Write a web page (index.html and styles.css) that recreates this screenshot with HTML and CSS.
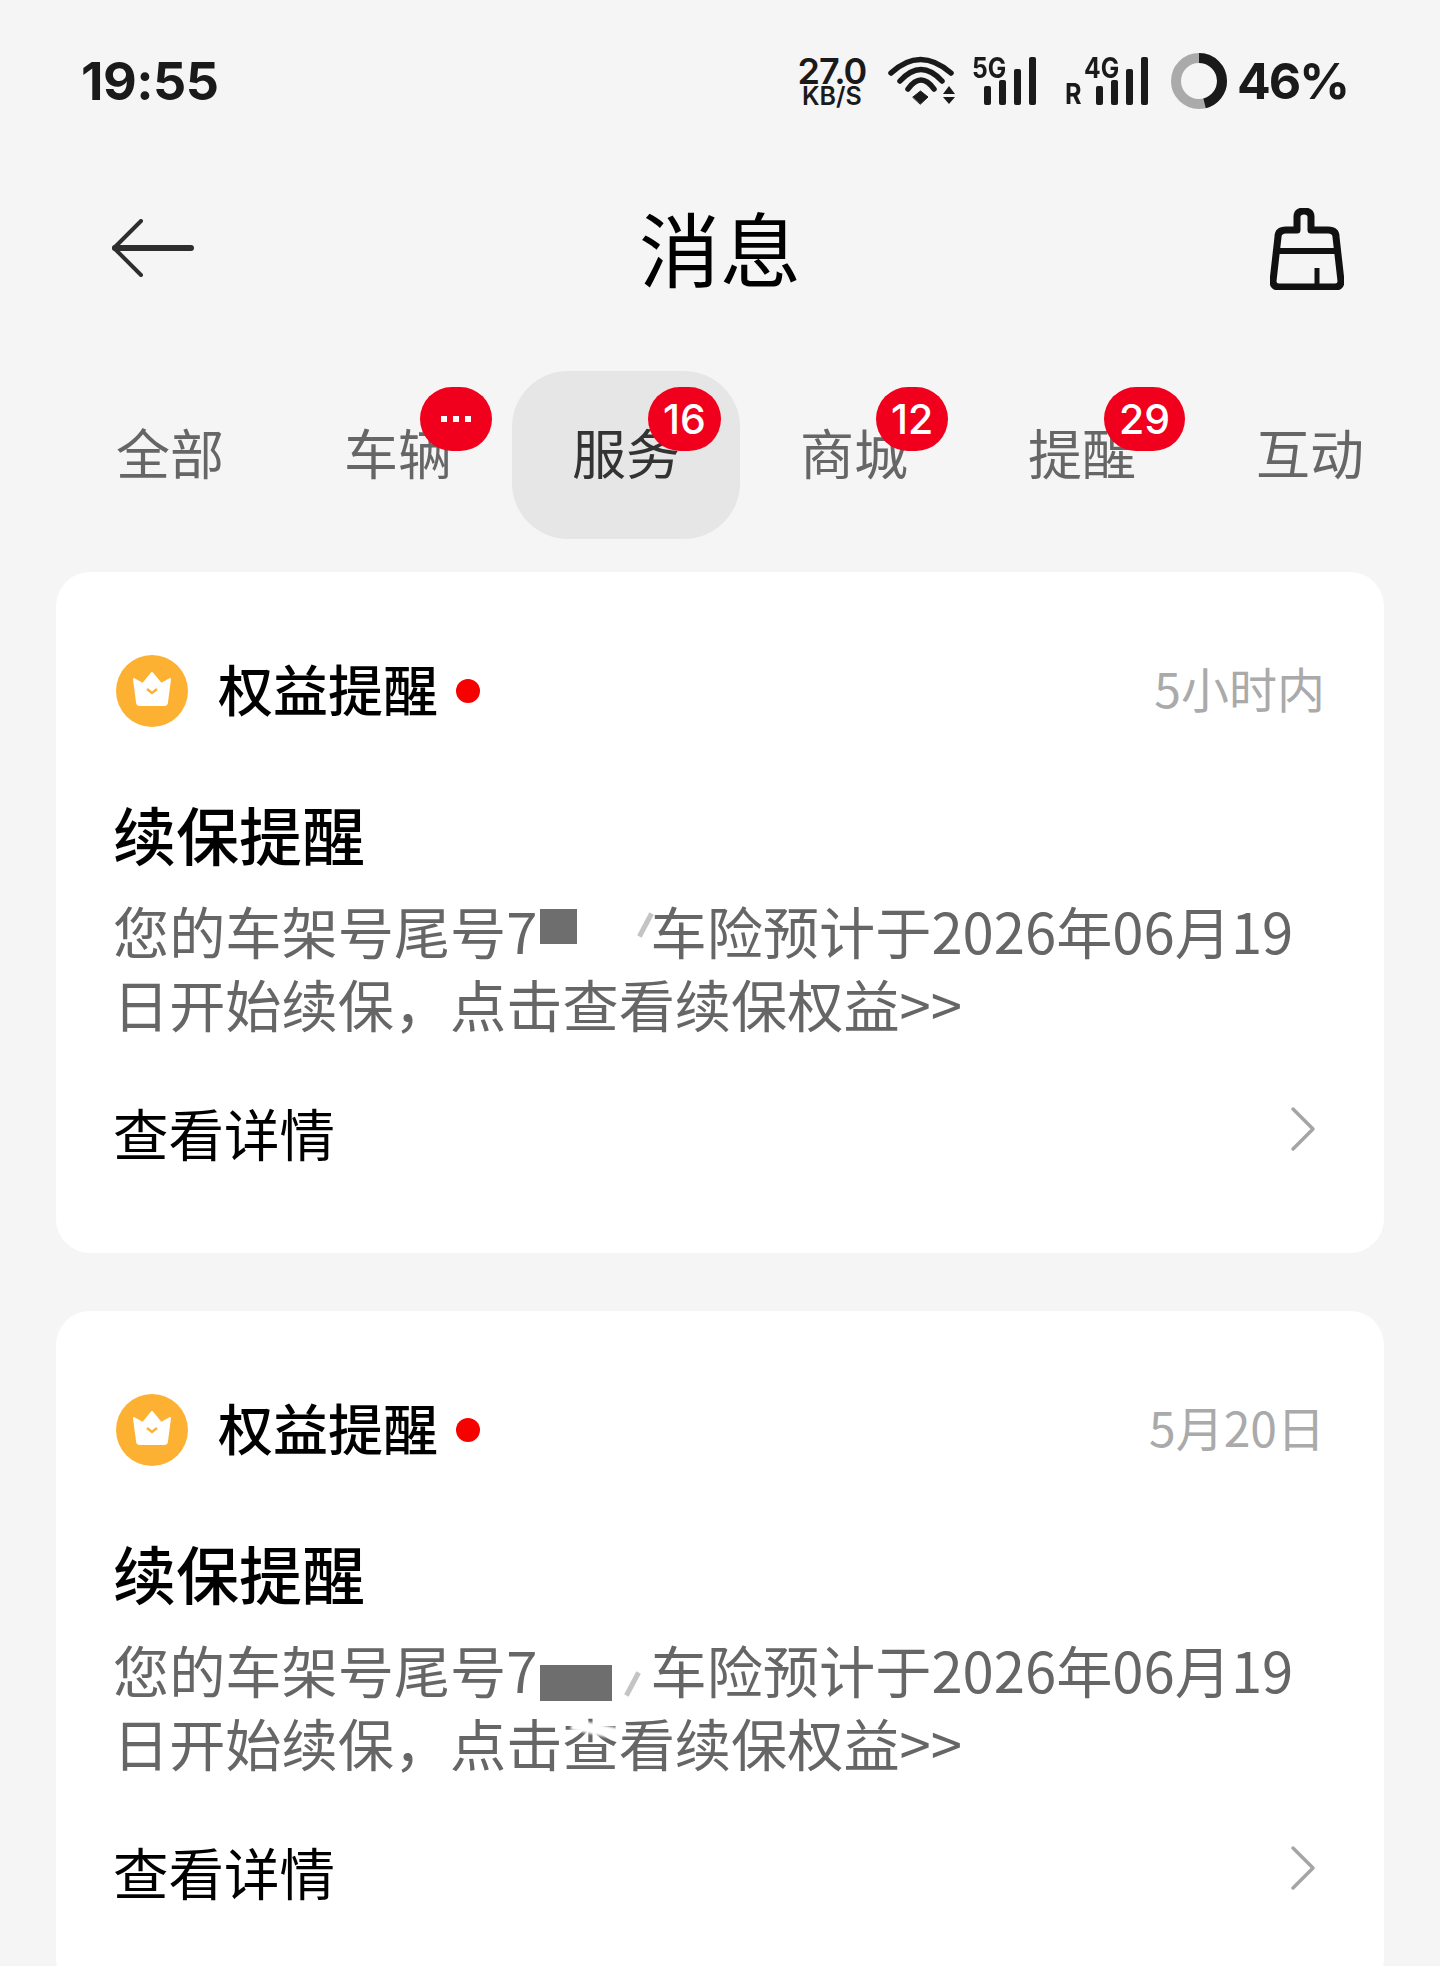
FILE: index.html
```html
<!DOCTYPE html>
<html lang="zh-CN">

<head>
    <meta charset="UTF-8">
    <meta name="viewport" content="width=device-width, initial-scale=1.0">
    <title>消息</title>

    <link rel="stylesheet" href="styles.css">
</head>

<body>
    <div class="statusbar">
        <div class="clock">19:55</div>
        <div class="status-right">
            <div class="speed">
                <span class="speed-num">27.0</span>
                <span class="speed-unit">KB/S</span>
            </div>
            <svg class="wifi" viewBox="0 0 70 50" fill="none" stroke="#1a1a1a" stroke-width="5.5" stroke-linecap="round">
                <path d="M4 17Q33 -10 64 17" />
                <path d="M13 25Q34 2 55 25" />
                <path d="M21 33Q34 15 47 33" />
                <path d="M26 41L33.5 35L41 41L33.5 48Z" fill="#1a1a1a" stroke-width="1" stroke="#1a1a1a" />
                <path d="M56 38L62 30L68 38ZM56 41L68 41L62 48Z" fill="#1a1a1a" stroke="none" />
            </svg>
            <div class="signal signal-5g">
                <span class="net">5G</span>
                <i class="bar b1"></i><i class="bar b2"></i><i class="bar b3"></i><i class="bar b4"></i>
            </div>
            <div class="signal signal-4g">
                <span class="roam">R</span>
                <span class="net">4G</span>
                <i class="bar b1"></i><i class="bar b2"></i><i class="bar b3"></i><i class="bar b4"></i>
            </div>
            <svg class="ring" viewBox="0 0 56 56" fill="none" stroke-width="10">
                <circle cx="28" cy="28" r="23" stroke="#aaaaaa" />
                <circle cx="28" cy="28" r="23" stroke="#1a1a1a" pathLength="100" stroke-dasharray="46 54" transform="rotate(-90 28 28)" />
            </svg>
            <div class="battery">46%</div>
        </div>
    </div>

    <div class="header">
        <svg class="back" viewBox="0 0 82 58" fill="none" stroke="#2e2e2e" stroke-width="4" stroke-linecap="round" stroke-linejoin="round">
            <path d="M29 2L2 29L29 56" />
            <path d="M3 29H79" stroke-width="6" />
        </svg>
        <div class="title">消息</div>
        <svg class="brush" viewBox="0 0 74 82" fill="none" stroke="#111" stroke-width="7" stroke-linejoin="round">
            <path d="M27 22V9Q27 3 34 3Q41 3 41 9V22H58Q66 22 66 29L71 73Q71 79 65 79H9Q3 79 3 73L8 29Q8 22 16 22Z" />
            <path d="M7 43H67" stroke-width="6" />
            <path d="M47 60V79" stroke-width="5" />
        </svg>
    </div>

    <div class="tabs">
        <div class="tab">全部</div>
        <div class="tab">车辆
            <div class="badge"><i></i><i></i><i></i></div>
        </div>
        <div class="tab on">服务
            <div class="badge">16</div>
        </div>
        <div class="tab">商城
            <div class="badge">12</div>
        </div>
        <div class="tab">提醒
            <div class="badge">29</div>
        </div>
        <div class="tab">互动</div>
    </div>

    <div class="list">
        <div class="card">
            <div class="card-head">
                <svg class="crown" viewBox="0 0 72 72">
                    <circle cx="36" cy="36" r="36" fill="#fdb133" />
                    <path d="M18 24L27 29L36 18L45 29L54 24L51 47Q51 50 48 50H24Q21 50 21 47Z" fill="#fff" stroke="#fff" stroke-width="2" stroke-linejoin="round" />
                    <path d="M31 34L36 38L41 34" fill="none" stroke="#fdb133" stroke-width="2.5" />
                </svg>
                <div class="kind">权益提醒</div>
                <div class="dot"></div>
                <div class="time">5小时内</div>
            </div>
            <div class="card-title">续保提醒</div>
            <div class="card-text">您的车架号尾号7<span class="mask mask-a"><i class="mask-block"></i><i class="mask-slash"></i></span>车险预计于2026年06月19日开始续保，点击查看续保权益&gt;&gt;</div>
            <div class="card-more">
                <span>查看详情</span>
                <svg class="arrow" viewBox="0 0 26 46" fill="none" stroke="#a5a5a5" stroke-width="3.5" stroke-linecap="round" stroke-linejoin="round">
                    <path d="M3 3L23 23L3 43" />
                </svg>
            </div>
        </div>

        <div class="card">
            <div class="card-head">
                <svg class="crown" viewBox="0 0 72 72">
                    <circle cx="36" cy="36" r="36" fill="#fdb133" />
                    <path d="M18 24L27 29L36 18L45 29L54 24L51 47Q51 50 48 50H24Q21 50 21 47Z" fill="#fff" stroke="#fff" stroke-width="2" stroke-linejoin="round" />
                    <path d="M31 34L36 38L41 34" fill="none" stroke="#fdb133" stroke-width="2.5" />
                </svg>
                <div class="kind">权益提醒</div>
                <div class="dot"></div>
                <div class="time">5月20日</div>
            </div>
            <div class="card-title">续保提醒</div>
            <div class="card-text">您的车架号尾号7<span class="mask mask-b"><i class="mask-block"></i><i class="mask-slash"></i><i class="mask-smear"></i></span>车险预计于2026年06月19日开始续保，点击查看续保权益&gt;&gt;</div>
            <div class="card-more">
                <span>查看详情</span>
                <svg class="arrow" viewBox="0 0 26 46" fill="none" stroke="#a5a5a5" stroke-width="3.5" stroke-linecap="round" stroke-linejoin="round">
                    <path d="M3 3L23 23L3 43" />
                </svg>
            </div>
        </div>
    </div>
</body>

</html>
```

FILE: styles.css
```css
* {
    box-sizing: border-box;
}

body {
    margin: 0;
    height: 1966px;
    overflow: hidden;
    background-color: #f5f5f5;
    font-family: "Noto Sans CJK SC", "Noto Sans", sans-serif;
    color: #000;
}

i {
    display: block;
}

/* 状态栏 */
.statusbar {
    height: 162px;
    padding: 0 92px 0 81px;
    display: flex;
    align-items: center;
    justify-content: space-between;
    color: #1a1a1a;
}

.clock {
    font-family: Inter, sans-serif;
    font-size: 52px;
    font-weight: 700;
    letter-spacing: -.5px;
}

.status-right {
    display: flex;
    align-items: center;
}

.speed {
    width: 70px;
    display: flex;
    flex-direction: column;
    align-items: center;
    font-family: Inter, sans-serif;
    font-weight: 600;
}

.speed-num {
    font-size: 36px;
    line-height: 29px;
    letter-spacing: -1px;
}

.speed-unit {
    font-size: 25px;
    line-height: 20px;
}

.wifi {
    width: 70px;
    height: 50px;
    margin-left: 20px;
}

.signal {
    position: relative;
    height: 48px;
    display: flex;
    align-items: flex-end;
    justify-content: flex-end;
    gap: 8px;
}

.signal-5g {
    width: 64px;
    margin-left: 15px;
}

.signal-4g {
    width: 83px;
    margin-left: 29px;
}

.bar {
    width: 7px;
    border-radius: 2px;
    background-color: #1a1a1a;
}

.b1 {
    height: 19px;
}

.b2 {
    height: 25px;
}

.b3 {
    height: 36px;
}

.b4 {
    height: 48px;
}

.net,
.roam {
    position: absolute;
    font-family: Inter, sans-serif;
    font-weight: 700;
    transform-origin: left top;
}

.net {
    top: -2px;
    left: 0;
    font-size: 28px;
    line-height: 26px;
    transform: scaleX(.88);
}

.signal-4g .net {
    left: 19px;
}

.roam {
    bottom: 0;
    left: 0;
    font-size: 28px;
    line-height: 22px;
    transform: scaleX(.9);
}

.ring {
    width: 56px;
    height: 56px;
    margin-left: 23px;
}

.battery {
    margin-left: 10px;
    font-family: Inter, sans-serif;
    font-size: 50px;
    font-weight: 700;
    letter-spacing: -2px;
}

/* 标题栏 */
.header {
    height: 172px;
    padding: 0 96px 0 112px;
    display: flex;
    align-items: center;
    justify-content: space-between;
}

.back {
    width: 82px;
    height: 58px;
}

.title {
    font-size: 81px;
    line-height: 100px;
    margin: -5px 18px 0 -6px;
}

.brush {
    width: 74px;
    height: 82px;
    margin-top: 1px;
}

/* tab */
.tabs {
    margin-top: 37px;
    padding-left: 56px;
    display: flex;
}

.tab {
    position: relative;
    width: 228px;
    height: 168px;
    line-height: 162px;
    text-align: center;
    font-size: 54px;
    color: #666;
    border-radius: 56px;
}

.tab.on {
    background-color: #e6e6e6;
    color: #333;
}

.badge {
    position: absolute;
    top: 16px;
    left: 136px;
    min-width: 72px;
    height: 64px;
    padding: 0 15px;
    border-radius: 32px;
    background-color: #f0001c;
    color: #fff;
    font-family: Inter, sans-serif;
    font-size: 41px;
    font-weight: 500;
    line-height: 64px;
    display: flex;
    align-items: center;
    justify-content: center;
    gap: 6px;
}

.badge i {
    width: 6px;
    height: 6px;
    background-color: #fff;
}

/* 消息卡片 */
.list {
    margin-top: 33px;
    padding: 0 56px;
    display: flex;
    flex-direction: column;
    gap: 58px;
}

.card {
    height: 681px;
    padding: 83px 60px 0;
    background-color: #fff;
    border-radius: 34px;
}

.card-head {
    height: 72px;
    display: flex;
    align-items: center;
}

.crown {
    width: 72px;
    height: 72px;
}

.kind {
    margin: -9px 0 0 30px;
    font-size: 55px;
    font-weight: 500;
}

.dot {
    width: 24px;
    height: 24px;
    margin-left: 18px;
    border-radius: 50%;
    background-color: #f60000;
}

.time {
    margin: -8px -1px 0 auto;
    font-size: 48px;
    color: #aaa;
}

.card-title {
    margin: 66px 0 0 -3px;
    font-size: 63px;
    line-height: 80px;
    font-weight: 500;
}

.card-text {
    margin: 20px 0 0 -3px;
    font-size: 56.2px;
    line-height: 73px;
    color: #666;
}

.mask {
    display: inline-block;
    position: relative;
    width: 113px;
    height: 40px;
}

.mask-block,
.mask-slash,
.mask-smear {
    position: absolute;
    background-color: #6e6e6e;
}

.mask-a .mask-block {
    left: 2px;
    top: -5px;
    width: 37px;
    height: 35px;
}

.mask-b .mask-block {
    left: 2px;
    top: 12px;
    width: 72px;
    height: 36px;
}

.mask-slash {
    width: 5px;
    height: 26px;
    transform: rotate(28deg);
    background-color: #c4c4c4;
}

.mask-a .mask-slash {
    left: 105px;
    top: -2px;
}

.mask-b .mask-slash {
    left: 92px;
    top: 18px;
}

.mask-smear {
    left: 33px;
    top: 71px;
    width: 52px;
    height: 11px;
    transform: rotate(12deg);
    background-color: #fff;
    filter: blur(1px);
}

.card-more {
    margin: 57px 0 0 -3px;
    height: 72px;
    display: flex;
    align-items: center;
    justify-content: space-between;
    font-size: 55.5px;
}

.arrow {
    width: 26px;
    height: 46px;
    margin-right: 8px;
    margin-top: -6px;
}
```
